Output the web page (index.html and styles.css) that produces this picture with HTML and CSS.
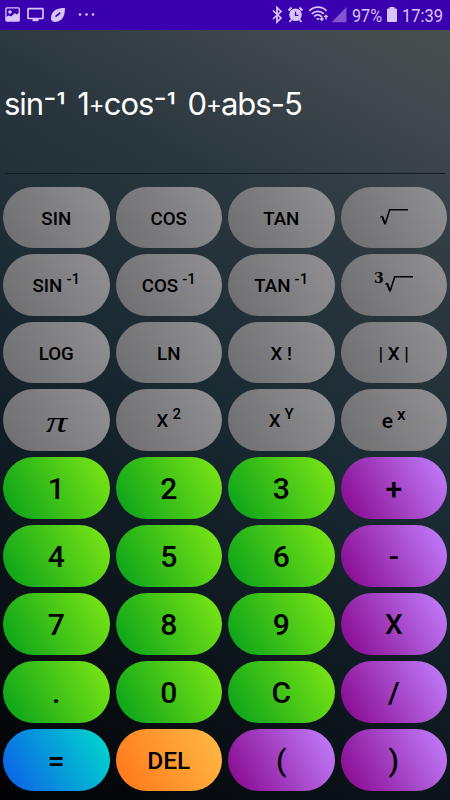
FILE: index.html
```html
<!DOCTYPE html>
<html lang="en">
<head>
    <meta charset="utf-8">
    <meta name="viewport" content="width=device-width, initial-scale=1">
    <title>Calculator</title>
    <link rel="stylesheet" href="styles.css">
</head>
<body>
<div class="status-bar">
    <svg class="status-icons" width="100" height="30" viewBox="0 0 100 30">
        <!-- picture -->
        <rect x="5.9" y="7.9" width="13.4" height="13.2" rx="1" fill="none" stroke="currentColor" stroke-width="1.3"/>
        <circle cx="10" cy="12" r="1.8" fill="currentColor"/>
        <path d="M6 17l3-1.5 2 1 4-3.5 1.500 1.500 2.500-1.500V21H6z" fill="currentColor"/>
        <!-- screen -->
        <rect x="28" y="8.700" width="15" height="9.800" rx=".5" fill="none" stroke="currentColor" stroke-width="1.700"/>
        <path d="M32.500 19h6v2.200h-6z" fill="currentColor"/>
        <!-- leaf -->
        <path d="M65 8C57 7.500 51 11 51 18c0 2.500 1 3.800 3.500 3.900C61 22 65 17.500 65 8z" fill="currentColor"/>
        <path d="M55.800 16.800c.5-1.600 2.200-1.200 4.200-4.300" fill="none" stroke="#3a00b0" stroke-width="1.700"/>
        <g fill="currentColor">
            <circle cx="80" cy="14.500" r="1.300"/>
            <circle cx="86.500" cy="14.500" r="1.300"/>
            <circle cx="93" cy="14.500" r="1.300"/>
        </g>
    </svg>
    <svg class="status-icons" width="180" height="30" viewBox="270 0 180 30">
        <!-- bluetooth -->
        <path d="M273 10.500l8 7.500-4 4V7.500l4 4-8 7.500" fill="none" stroke="currentColor" stroke-width="1.700"/>
        <!-- alarm -->
        <circle cx="295.500" cy="14.800" r="6.300" fill="currentColor"/>
        <path d="M288.500 10.500l3-3M299.500 7.500l3 3M291.500 19.500l-2 2.500M299.500 19.500l2 2.500" stroke="currentColor" stroke-width="1.800"/>
        <path d="M295.500 11.500v3.800h3" fill="none" stroke="#3a00b0" stroke-width="1.300"/>
        <!-- wifi -->
        <g fill="none" stroke="currentColor" stroke-width="1.800">
            <path d="M309.300 10.800c5-4.800 12.500-4.800 17.200 0"/>
            <path d="M311.800 13.800c3.500-3.300 8.700-3.300 12 0"/>
            <path d="M314.200 16.500c2-2 5-2 7 0"/>
        </g>
        <path d="M315.800 18.300h4.200L318 20.500z" fill="currentColor"/>
        <path d="M321.800 16v4M320.200 18.500l1.600 1.700 1.600-1.700M326 19.500v-4M324.300 17l1.700-1.700 1.700 1.700" fill="none" stroke="currentColor" stroke-width="1.300"/>
        <!-- signal -->
        <path d="M346.500 7v15.200H331.500z" fill="#8055cf"/>
        <text x="352" y="21.500" textLength="30" lengthAdjust="spacingAndGlyphs">97%</text>
        <!-- battery -->
        <path d="M387 9.500q0-1 1-1h1.500V7h5v1.500h1.500q1 0 1 1V21q0 1-1 1h-8q-1 0-1-1z" fill="currentColor"/>
        <text x="402" y="21.500" textLength="41" lengthAdjust="spacingAndGlyphs">17:39</text>
    </svg>
</div>

<div class="display">
    <div class="expression">sin<span class="inv">⁻¹</span> 1<span class="plus">+</span>cos<span class="inv">⁻¹</span> 0<span class="plus">+</span>abs-5</div>
</div>

<div class="keypad">
    <button class="key func">SIN</button>
    <button class="key func">COS</button>
    <button class="key func">TAN</button>
    <button class="key func">
        <svg width="30" height="18" viewBox="0 0 30 18" fill="none" stroke="#000">
            <path d="M1 9.500l2-1.500" stroke-width="1"/>
            <path d="M3 8.200l3 7.600" stroke-width="2"/>
            <path d="M6 16.500L10.700 1.700H29" stroke-width="1.500"/>
        </svg>
    </button>

    <button class="key func">SIN<sup>-1</sup></button>
    <button class="key func">COS<sup>-1</sup></button>
    <button class="key func">TAN<sup>-1</sup></button>
    <button class="key func">
        <span class="root-index">3</span>
        <svg width="30" height="18" viewBox="0 0 30 18" fill="none" stroke="#000">
            <path d="M1 9.500l2-1.500" stroke-width="1"/>
            <path d="M3 8.200l3 7.600" stroke-width="2"/>
            <path d="M6 16.500L10.700 1.700H29" stroke-width="1.500"/>
        </svg>
    </button>

    <button class="key func">LOG</button>
    <button class="key func">LN</button>
    <button class="key func">X !</button>
    <button class="key func">| X |</button>

    <button class="key func"><span class="pi">π</span></button>
    <button class="key func">X<sup>2</sup></button>
    <button class="key func">X<sup>Y</sup></button>
    <button class="key func e-key">e<sup>x</sup></button>

    <button class="key num">1</button>
    <button class="key num">2</button>
    <button class="key num">3</button>
    <button class="key op">+</button>

    <button class="key num">4</button>
    <button class="key num">5</button>
    <button class="key num">6</button>
    <button class="key op">-</button>

    <button class="key num">7</button>
    <button class="key num">8</button>
    <button class="key num">9</button>
    <button class="key op times">X</button>

    <button class="key num">.</button>
    <button class="key num">0</button>
    <button class="key num">C</button>
    <button class="key op">/</button>

    <button class="key equals">=</button>
    <button class="key del">DEL</button>
    <button class="key op">(</button>
    <button class="key op">)</button>
</div>
</body>
</html>
```
FILE: styles.css
```css
* {
    box-sizing: border-box;
}
body {
    margin: 0;
    height: 800px;
    overflow: hidden;
    font-family: Roboto, sans-serif;
    background: linear-gradient(29.4deg, #020204 0%, #0d171e 28%, #1a2a33 50%, #2b373e 71%, #40494e 88%, #4c504e 100%);
}
.status-bar {
    display: flex;
    justify-content: space-between;
    height: 30px;
    background-color: #3a00b0;
}
.status-icons {
    display: block;
    color: #d8c5f7;
    font-size: 18px;
}
.status-icons text {
    fill: currentColor;
}
.display {
    display: flex;
    align-items: center;
    height: 144px;
    margin: 0 5px;
    padding-top: 7px;
    border-bottom: 1px solid #121b21;
}
.expression {
    color: white;
    font-family: Inter, sans-serif;
    font-size: 31px;
    line-height: 40px;
    letter-spacing: -1px;
    word-spacing: 4px;
    margin-left: -1px;
    white-space: nowrap;
}
.inv {
    position: relative;
    top: 3px;
    letter-spacing: -0.2px;
}
.plus {
    font-size: 24px;
    position: relative;
    top: -2px;
}
.keypad {
    display: grid;
    grid-template-columns: repeat(4, 1fr);
    grid-template-rows: repeat(4, 61.5px) repeat(5, 62px);
    gap: 6px;
    padding: 12.8px 3px 0;
}
.key {
    display: flex;
    align-items: center;
    justify-content: center;
    padding: 2px 0 0;
    border: none;
    border-radius: 31px;
    color: black;
    font-family: Roboto, sans-serif;
    font-size: 30px;
    font-weight: 500;
    white-space: pre;
}
.func {
    font-size: 18.7px;
    background: linear-gradient(60deg, #6d6d70, #929295);
}
.func svg {
    position: relative;
    top: -2px;
}
.func sup {
    margin-left: 4px;
    font-size: 15px;
    line-height: 1;
    position: relative;
    top: -7px;
}
.e-key {
    font-size: 21px;
}
.e-key sup {
    font-size: 17px;
}
.num {
    background: linear-gradient(60deg, #05a01a, #7fe815);
}
.op {
    background: linear-gradient(60deg, #85048a, #c382ff);
}
.times {
    font-size: 28px;
}
.equals {
    background: linear-gradient(60deg, #0c5ce8, #00dccb);
}
.del {
    font-size: 24.5px;
    background: linear-gradient(60deg, #ff7518, #ffbb45);
}
.root-index {
    font-family: "DejaVu Serif", serif;
    font-size: 14px;
    font-weight: bold;
    position: relative;
    top: -8px;
}
.pi {
    font-family: "Liberation Serif", serif;
    font-size: 30px;
    font-style: italic;
    transform: translateY(1px) scaleX(1.4);
}
```
